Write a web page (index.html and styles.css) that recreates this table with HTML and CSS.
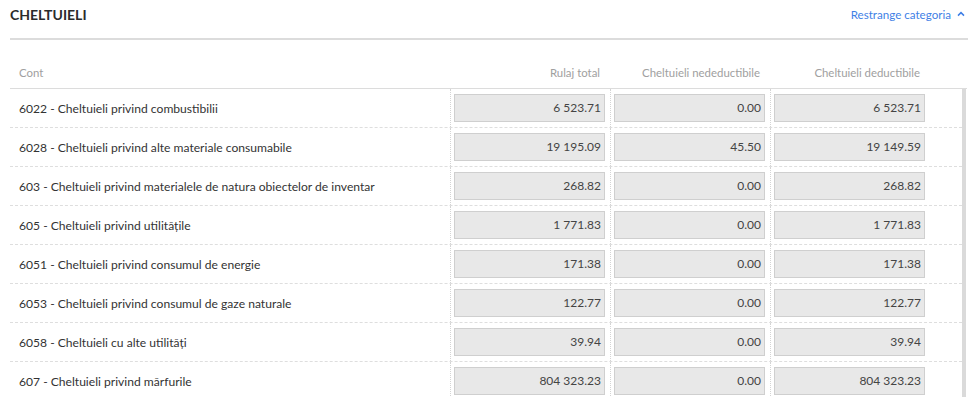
FILE: index.html
```html
<!DOCTYPE html>
<html lang="ro">
<head>
<meta charset="utf-8">
<title>Cheltuieli</title>
<link rel="stylesheet" href="styles.css">
</head>
<body>
<div class="panel">
  <div class="panel-head">
    <h2 class="title">CHELTUIELI</h2>
    <a class="collapse" href="#">Restrange categoria
      <svg class="chev" width="8" height="6" viewBox="0 0 8 6"><path d="M1 4.6 L4 1.6 L7 4.6" fill="none" stroke="currentColor" stroke-width="1.5"/></svg>
    </a>
  </div>
  <div class="table">
    <div class="row head">
      <div class="cell">Cont</div>
      <div class="cell num">Rulaj total</div>
      <div class="cell num">Cheltuieli nedeductibile</div>
      <div class="cell num">Cheltuieli deductibile</div>
      <div class="cell"></div>
    </div>
    <div class="body">
      <div class="row"><div class="cell acc">6022 - Cheltuieli privind combustibilii</div><div class="cell val"><div class="box">6 523.71</div></div><div class="cell val"><div class="box">0.00</div></div><div class="cell val"><div class="box">6 523.71</div></div><div class="cell"></div></div>
      <div class="row"><div class="cell acc">6028 - Cheltuieli privind alte materiale consumabile</div><div class="cell val"><div class="box">19 195.09</div></div><div class="cell val"><div class="box">45.50</div></div><div class="cell val"><div class="box">19 149.59</div></div><div class="cell"></div></div>
      <div class="row"><div class="cell acc">603 - Cheltuieli privind materialele de natura obiectelor de inventar</div><div class="cell val"><div class="box">268.82</div></div><div class="cell val"><div class="box">0.00</div></div><div class="cell val"><div class="box">268.82</div></div><div class="cell"></div></div>
      <div class="row"><div class="cell acc">605 - Cheltuieli privind utilitățile</div><div class="cell val"><div class="box">1 771.83</div></div><div class="cell val"><div class="box">0.00</div></div><div class="cell val"><div class="box">1 771.83</div></div><div class="cell"></div></div>
      <div class="row"><div class="cell acc">6051 - Cheltuieli privind consumul de energie</div><div class="cell val"><div class="box">171.38</div></div><div class="cell val"><div class="box">0.00</div></div><div class="cell val"><div class="box">171.38</div></div><div class="cell"></div></div>
      <div class="row"><div class="cell acc">6053 - Cheltuieli privind consumul de gaze naturale</div><div class="cell val"><div class="box">122.77</div></div><div class="cell val"><div class="box">0.00</div></div><div class="cell val"><div class="box">122.77</div></div><div class="cell"></div></div>
      <div class="row"><div class="cell acc">6058 - Cheltuieli cu alte utilități</div><div class="cell val"><div class="box">39.94</div></div><div class="cell val"><div class="box">0.00</div></div><div class="cell val"><div class="box">39.94</div></div><div class="cell"></div></div>
      <div class="row"><div class="cell acc">607 - Cheltuieli privind mărfurile</div><div class="cell val"><div class="box">804 323.23</div></div><div class="cell val"><div class="box">0.00</div></div><div class="cell val"><div class="box">804 323.23</div></div><div class="cell"></div></div>
    </div>
  </div>
</div>
</body>
</html>
```

FILE: styles.css
```css
* { box-sizing: border-box; }
html, body { margin: 0; padding: 0; background: #fff; }
body {
  font-family: Lato, "Open Sans", "Liberation Sans", sans-serif;
  color: #333;
  font-size: 12px;
  overflow: hidden;
  height: 397px;
}
.panel { padding: 0 7px 0 10px; }
.panel-head {
  display: flex;
  align-items: center;
  justify-content: space-between;
  height: 40px;
  border-bottom: 2px solid #dcdcdc;
  padding-bottom: 10px;
}
.title {
  margin: 0;
  font-size: 14px;
  font-weight: 700;
  color: #2b2b2b;
}
.collapse {
  color: #3f7fe6;
  text-decoration: none;
  font-size: 11.6px;
  display: flex;
  align-items: center;
  gap: 6px;
  padding-right: 3px;
}
.chev { display: block; margin-top: -1px; }
.row {
  display: grid;
  grid-template-columns: 440px 160px 160px 160px 1fr;
  height: 39px;
  border-bottom: 1px dashed #dedede;
}
.row.head {
  height: 49px;
  border-bottom: 1px solid #dcdcdc;
  margin-right: 1px;
  color: #a0a0a0;
  font-size: 11.4px;
  align-items: end;
}
.row.head .cell { display: block; padding: 0 10px 9px 9px; }
.row.head .num { text-align: right; }
.body {
  border-right: 4px solid #dadada;
  margin-right: 2px;
  height: 320px;
}
.cell { display: flex; align-items: center; }
.acc { padding-left: 9px; color: #333; font-size: 12.1px; }
.val {
  border-left: 1px dotted #d4d4d4;
  padding: 0 5px 0 3px;
}
.box {
  width: 100%;
  height: 28px;
  background: #e8e8e8;
  border: 1px solid #cfcfcf;
  text-align: right;
  line-height: 26px;
  padding-right: 3px;
  color: #444;
  font-size: 12px;
}
```
